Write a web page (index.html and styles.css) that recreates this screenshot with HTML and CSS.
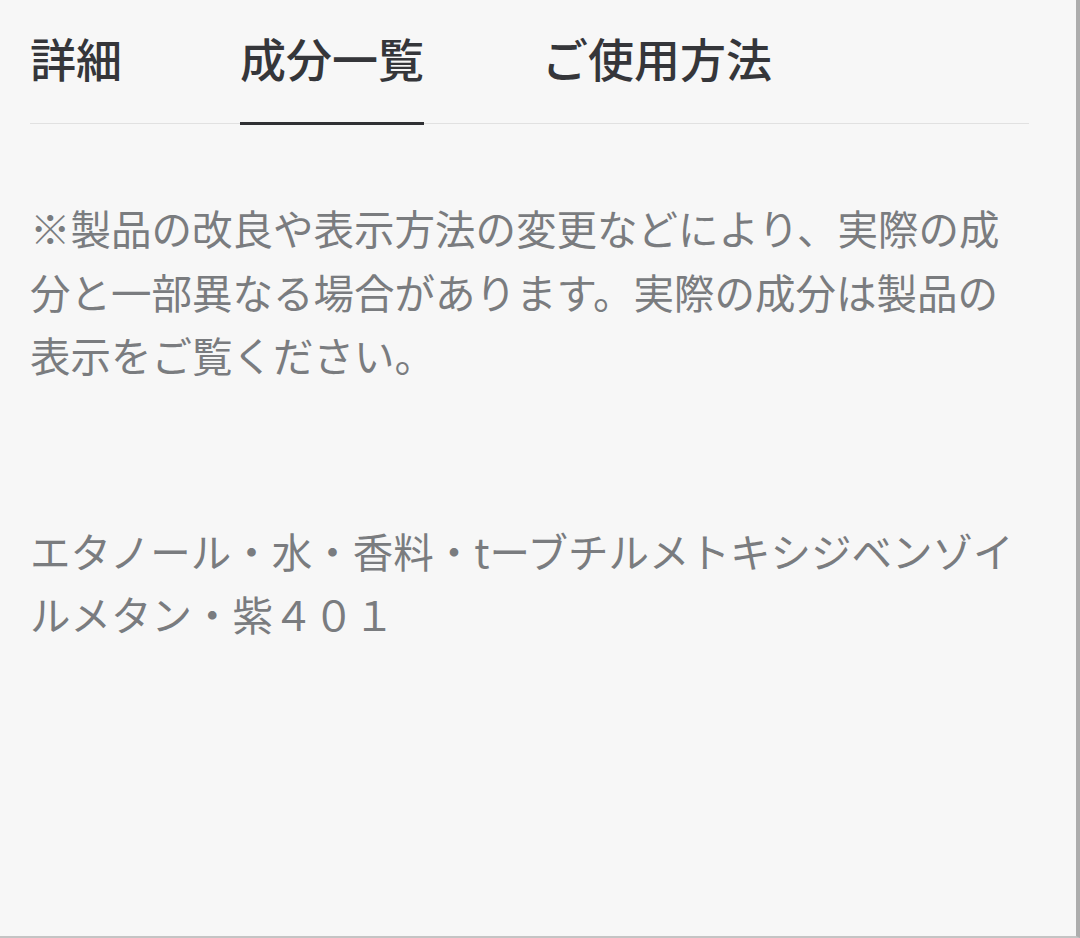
FILE: index.html
```html
<!DOCTYPE html>
<html lang="ja">
<head>
    <meta charset="UTF-8">
    <meta name="viewport" content="width=device-width, initial-scale=1.0">
    <title>成分一覧</title>
    <link rel="stylesheet" href="styles.css">
</head>
<body>
    <div class="page">
        <!-- タブ -->
        <div class="tabs">
            <div class="tab">詳細</div>
            <div class="tab active">成分一覧</div>
            <div class="tab">ご使用方法</div>
        </div>

        <!-- 成分 -->
        <div class="content">
            <p class="note">※製品の改良や表示方法の変更などにより、実際の成分と一部異なる場合があります。実際の成分は製品の表示をご覧ください。</p>
            <p class="ingredients">エタノール・水・香料・tーブチルメトキシジベンゾイルメタン・紫４０１</p>
        </div>
    </div>
</body>
</html>
```

FILE: styles.css
```css
html, body {
    margin: 0;
    height: 100%;
}

body {
    background-color: #f7f7f7;
    font-family: "Noto Sans CJK JP", "Noto Sans", sans-serif;
}

.page {
    box-sizing: border-box;
    height: 938px;
    padding: 0 47px 0 30px;
    border-right: 4px solid #adadad;
    border-bottom: 2px solid #c4c4c4;
}

.tabs {
    display: flex;
    gap: 118px;
    border-bottom: 1px solid #e1e1e1;
    padding-top: 21px;
}

.tab {
    font-size: 46px;
    font-weight: 500;
    color: #35363a;
    line-height: 72px;
    padding-bottom: 29px;
}

.tab.active {
    border-bottom: 3px solid #303134;
    margin-bottom: -2px;
}

.content {
    padding-top: 72px;
}

.note,
.ingredients {
    margin: 0;
    font-size: 40.5px;
    line-height: 63.5px;
    color: #7a7c7f;
    word-break: break-all;
}

.ingredients {
    margin-top: 132px;
}
```
